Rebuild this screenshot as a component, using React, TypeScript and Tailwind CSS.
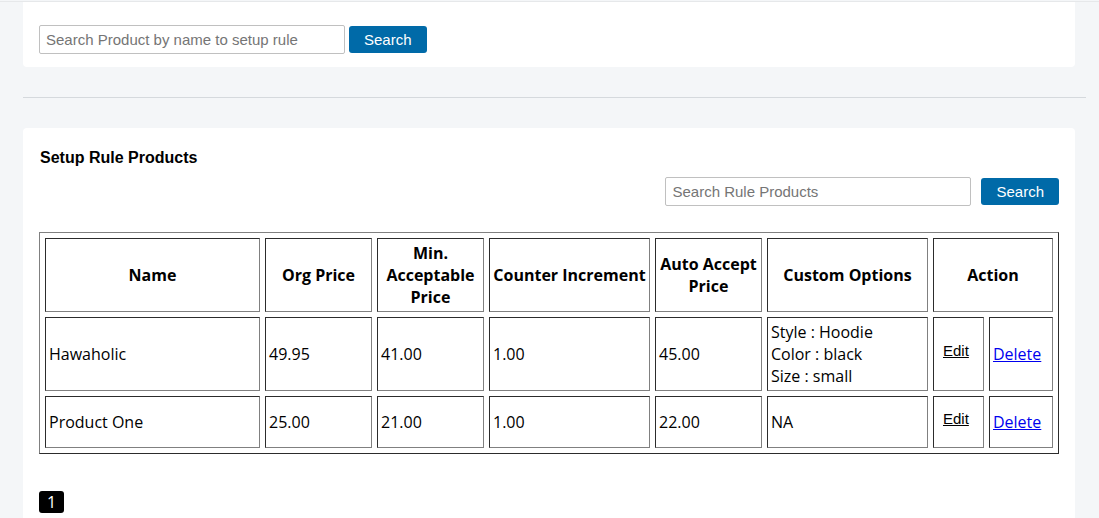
import { useState } from 'react';

type Rule = {
  name: string;
  orgPrice: string;
  minPrice: string;
  increment: string;
  acceptPrice: string;
  options: string[];
};

const rules: Rule[] = [
  {
    name: 'Hawaholic',
    orgPrice: '49.95',
    minPrice: '41.00',
    increment: '1.00',
    acceptPrice: '45.00',
    options: ['Style : Hoodie', 'Color : black', 'Size : small'],
  },
  {
    name: 'Product One',
    orgPrice: '25.00',
    minPrice: '21.00',
    increment: '1.00',
    acceptPrice: '22.00',
    options: ['NA'],
  },
];

const cell =
  'border border-t-[#2c2c2c] border-l-[#2c2c2c] border-r-[#808080] border-b-[#808080] p-[3px] align-middle';

function SearchForm({ label, className }: { label: string; className: string }) {
  const [query, setQuery] = useState('');
  return (
    <form
      role="search"
      onSubmit={(e) => e.preventDefault()}
      className={`flex items-center font-['Liberation_Sans',Arial,sans-serif] text-[15px] leading-[17px] ${className}`}
    >
      <input
        type="text"
        aria-label={label}
        placeholder={label}
        value={query}
        onChange={(e) => setQuery(e.target.value)}
        className="h-[29px] w-[306px] min-w-0 rounded-[2px] border border-[#c0c0c0] bg-white px-1.5 text-black placeholder:text-[#757575]"
      />
      <button type="submit" className="h-[27px] rounded-[3px] bg-[#006aa8] px-[15px] text-white">
        Search
      </button>
    </form>
  );
}

function RuleRow({ rule }: { rule: Rule }) {
  return (
    <tr className="h-[52px]">
      <td className={cell}>{rule.name}</td>
      <td className={cell}>{rule.orgPrice}</td>
      <td className={cell}>{rule.minPrice}</td>
      <td className={cell}>{rule.increment}</td>
      <td className={cell}>{rule.acceptPrice}</td>
      <td className={cell}>
        {rule.options.map((option) => (
          <div key={option}>{option}</div>
        ))}
      </td>
      <td className={cell}>
        <button
          type="button"
          className="block px-1.5 pb-2 font-['Liberation_Sans',Arial,sans-serif] text-[15px] font-normal leading-[17px] text-black underline"
        >
          Edit
        </button>
      </td>
      <td className={cell}>
        <a href="#delete" className="text-[#0000ee] underline">
          Delete
        </a>
      </td>
    </tr>
  );
}

export default function App() {
  return (
    <div className="min-h-screen bg-[#f4f6f8] pt-px font-['Open_Sans',sans-serif] text-[16px] leading-[22px] text-black">
      <div className="border-t border-[#e6e8ea] pl-[23px]">
        <section className="mr-6 rounded-b-[4px] bg-white px-4 pt-[23px] pb-[13px]">
          <SearchForm label="Search Product by name to setup rule" className="gap-1" />
        </section>

        <hr className="mt-[30px] mr-[13px] mb-[30px] border-t border-[#d5d9dd]" />

        <section className="mr-6 min-h-[390px] rounded-t-[4px] bg-white px-4 pt-5">
          <h1 className="px-px font-['Liberation_Sans',Arial,sans-serif] text-[16px] font-bold leading-[20px]">
            Setup Rule Products
          </h1>
          <SearchForm label="Search Rule Products" className="mt-[9px] justify-end gap-2.5" />

          <table className="mt-[26px] w-full table-fixed border-separate border-spacing-[5px] border border-t-[#808080] border-l-[#808080] border-r-[#2c2c2c] border-b-[#2c2c2c] font-normal">
            <colgroup>
              <col />
              <col className="w-[107px]" />
              <col className="w-[107px]" />
              <col className="w-[161px]" />
              <col className="w-[107px]" />
              <col className="w-[161px]" />
              <col className="w-[51px]" />
              <col className="w-[64px]" />
            </colgroup>
            <thead className="font-semibold">
              <tr>
                <th scope="col" className={cell}>Name</th>
                <th scope="col" className={cell}>Org Price</th>
                <th scope="col" className={cell}>Min. Acceptable Price</th>
                <th scope="col" className={cell}>Counter Increment</th>
                <th scope="col" className={cell}>Auto Accept Price</th>
                <th scope="col" className={cell}>Custom Options</th>
                <th scope="colgroup" colSpan={2} className={cell}>Action</th>
              </tr>
            </thead>
            <tbody>
              {rules.map((rule) => (
                <RuleRow key={rule.name} rule={rule} />
              ))}
            </tbody>
          </table>

          <nav aria-label="Pagination" className="mt-[37px] flex">
            <a href="#page-1" aria-current="page" className="rounded-[3px] bg-black px-2 text-white">
              1
            </a>
          </nav>
        </section>
      </div>
    </div>
  );
}
